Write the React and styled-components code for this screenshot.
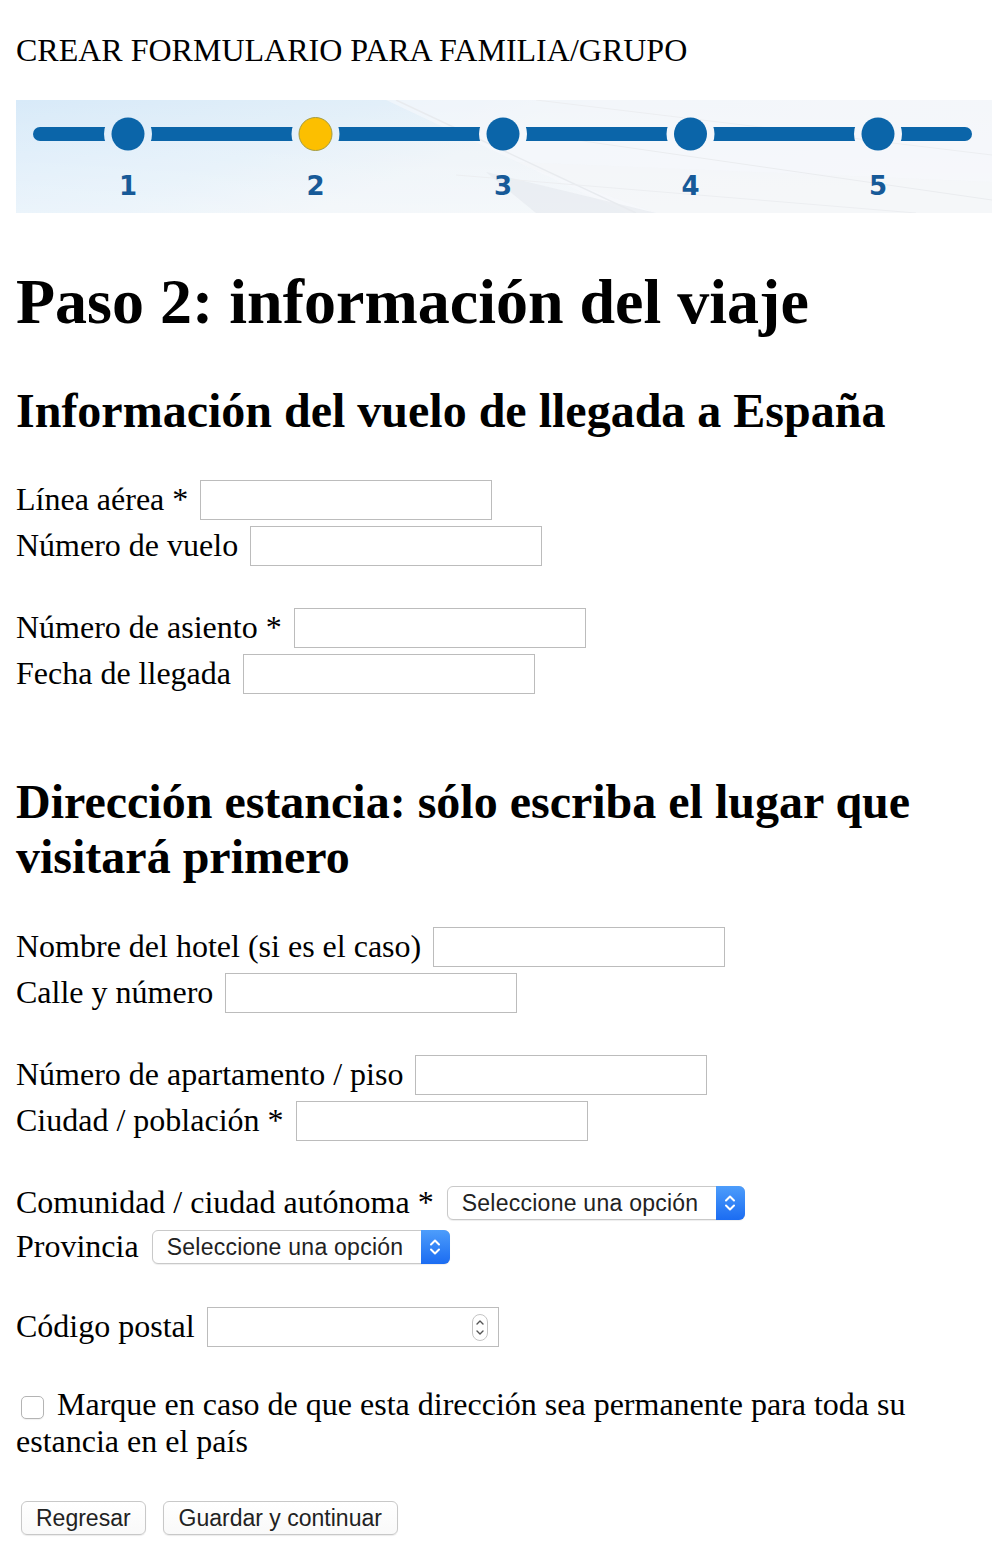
import React from "react";
import styled, { createGlobalStyle } from "styled-components";

const GlobalStyle = createGlobalStyle`
  html, body { margin: 0; padding: 0; background: #fff; }
  body { font-family: "Liberation Serif", "Times New Roman", serif; color: #000; }
`;

const Page = styled.div`
  padding: 0 16px 40px;
  width: 976px;
`;

const Title = styled.div`
  margin: 32px 0 0;
  font-size: 32px;
  line-height: 36px;
  white-space: nowrap;
`;

const BannerBox = styled.div`
  margin-top: 32px;
  height: 113px;
  line-height: 0;
`;

const H1 = styled.h1`
  margin: 52px 0 0;
  font-size: 64px;
  line-height: 74px;
  font-weight: 700;
`;

const H2 = styled.h2`
  margin: ${(p) => p.$top}px 0 0;
  font-size: 48px;
  line-height: 55px;
  font-weight: 700;
`;

const Group = styled.div`
  margin-top: ${(p) => p.$top}px;
  display: flex;
  flex-direction: column;
`;

const Row = styled.div`
  display: flex;
  align-items: center;
  height: ${(p) => p.$h || 46}px;
`;

const Label = styled.label`
  font-size: 32px;
  line-height: 37px;
  white-space: nowrap;
  margin-top: -1px;
`;

const TextInput = styled.input`
  box-sizing: border-box;
  width: 292px;
  height: 40px;
  margin: 0 0 0 12px;
  border: 1px solid #bcbcbc;
  background: #fff;
  padding: 0 8px;
  font: 22px "Liberation Sans", sans-serif;
  outline: none;
`;

const NumberWrap = styled.div`
  position: relative;
  margin-left: 12px;
  width: 292px;
  height: 40px;
`;

const NumberField = styled(TextInput)`
  margin: 0;
`;

const Spinner = styled.svg`
  position: absolute;
  right: 11px;
  top: 7px;
  pointer-events: none;
`;

const SelectWrap = styled.div`
  position: relative;
  margin-left: 13px;
  width: 298px;
  height: 34px;
`;

const Select = styled.select`
  appearance: none;
  -webkit-appearance: none;
  box-sizing: border-box;
  width: 100%;
  height: 100%;
  margin: 0;
  border: 1px solid #c9c9c9;
  border-radius: 6px;
  background: #fff;
  box-shadow: 0 1px 1px rgba(0, 0, 0, 0.07);
  padding: 0 36px 0 14px;
  font: 23px "Liberation Sans", Arial, sans-serif;
  letter-spacing: 0.25px;
  color: #222;
  outline: none;
`;

const SelectArrow = styled.span`
  position: absolute;
  top: 0;
  right: 0;
  bottom: 0;
  width: 29px;
  border-radius: 0 6px 6px 0;
  background: linear-gradient(#4d9dfb, #1b6cf2);
  display: flex;
  align-items: center;
  justify-content: center;
  pointer-events: none;
`;

const CheckPara = styled.p`
  margin: 36px 0 0;
  font-size: 32px;
  line-height: 37px;
`;

const Check = styled.input`
  appearance: none;
  -webkit-appearance: none;
  box-sizing: border-box;
  width: 23px;
  height: 23px;
  margin: 0 5px;
  vertical-align: -4px;
  border: 1px solid #b4b4b4;
  border-radius: 5px;
  background: #fff;
  box-shadow: 0 1px 1px rgba(0, 0, 0, 0.06);
`;

const Buttons = styled.div`
  margin-top: 41px;
  display: flex;
  gap: 17px;
  padding-left: 5px;
`;

const Button = styled.button`
  box-sizing: border-box;
  height: 34px;
  padding: 0 ${(p) => p.$pad || 15}px;
  border: 1px solid #c8c8c8;
  border-radius: 6px;
  background: linear-gradient(#ffffff, #f9f9f9);
  box-shadow: 0 1px 1px rgba(0, 0, 0, 0.08);
  font: 23px "Liberation Sans", Arial, sans-serif;
  color: #222;
  line-height: 32px;
`;

const centers = [112, 299.5, 487, 674.5, 862];

function Banner() {
  return (
    <BannerBox>
      <svg width="976" height="113" viewBox="0 0 976 113">
        <defs>
          <linearGradient id="bg" x1="0" x2="1" y1="0" y2="0.3">
            <stop offset="0" stopColor="#d8eaf9" />
            <stop offset="0.35" stopColor="#e2eff9" />
            <stop offset="0.55" stopColor="#edf3f8" />
            <stop offset="1" stopColor="#f1f4f8" />
          </linearGradient>
          <linearGradient id="vg" x1="0" x2="0" y1="0" y2="1">
            <stop offset="0" stopColor="#ffffff" stopOpacity="0" />
            <stop offset="1" stopColor="#ffffff" stopOpacity="0.35" />
          </linearGradient>
          <mask id="lineMask" maskUnits="userSpaceOnUse" x="0" y="0" width="976" height="113">
            <rect x="0" y="0" width="976" height="113" fill="white" />
            {centers.map((c) => (
              <circle key={c} cx={c} cy="34" r="24" fill="black" />
            ))}
          </mask>
        </defs>
        <rect width="976" height="113" fill="url(#bg)" />
        <rect width="976" height="113" fill="url(#vg)" />
        <polygon points="370,0 976,0 976,113 610,113" fill="#f7f9fb" opacity="0.6" />
        <polygon points="470,72 640,113 520,113" fill="#e2e6eb" opacity="0.5" />
        <polygon points="500,62 976,82 976,113 640,113" fill="#f4f6f8" opacity="0.5" />
        <line x1="380" y1="0" x2="620" y2="113" stroke="#e8ebef" strokeWidth="1.5" />
        <line x1="520" y1="0" x2="976" y2="55" stroke="#eceef1" strokeWidth="1" />
        <line x1="560" y1="40" x2="976" y2="100" stroke="#eaecef" strokeWidth="1" />
        <line x1="440" y1="75" x2="900" y2="113" stroke="#eceef1" strokeWidth="1" />
        <rect x="17" y="27" width="939" height="14" rx="7" fill="#0b65a9" mask="url(#lineMask)" />
        {centers.map((c, i) => (
          <circle
            key={c}
            cx={c}
            cy="34"
            r="16.5"
            fill={i === 1 ? "#fcbf00" : "#0b65a9"}
            stroke={i === 1 ? "#a39c45" : "none"}
            strokeWidth="1"
          />
        ))}
        {centers.map((c, i) => (
          <text
            key={c}
            x={c}
            y="95"
            textAnchor="middle"
            fontFamily="'DejaVu Sans', Verdana, sans-serif"
            fontWeight="700"
            fontSize="26"
            fill="#175a98"
          >
            {i + 1}
          </text>
        ))}
      </svg>
    </BannerBox>
  );
}

function Field({ label }) {
  return (
    <Row>
      <Label>{label}</Label>
      <TextInput type="text" />
    </Row>
  );
}

function SelectField({ label }) {
  return (
    <Row $h={44}>
      <Label>{label}</Label>
      <SelectWrap>
        <Select defaultValue="">
          <option value="">Seleccione una opción</option>
        </Select>
        <SelectArrow>
          <svg width="12" height="20" viewBox="0 0 12 20">
            <polyline points="2,7.5 6,3.5 10,7.5" fill="none" stroke="#fff" strokeWidth="2" strokeLinecap="round" strokeLinejoin="round" />
            <polyline points="2,12.5 6,16.5 10,12.5" fill="none" stroke="#fff" strokeWidth="2" strokeLinecap="round" strokeLinejoin="round" />
          </svg>
        </SelectArrow>
      </SelectWrap>
    </Row>
  );
}

function NumberInputField({ label }) {
  return (
    <Row>
      <Label>{label}</Label>
      <NumberWrap>
        <NumberField type="text" inputMode="numeric" />
        <Spinner width="16" height="27" viewBox="0 0 16 27">
          <rect x="0.5" y="0.5" width="15" height="26" rx="7.5" fill="#fff" stroke="#c4c4c4" />
          <polyline points="5,10 8,7 11,10" fill="none" stroke="#555" strokeWidth="1.4" strokeLinecap="round" strokeLinejoin="round" />
          <polyline points="5,17 8,20 11,17" fill="none" stroke="#555" strokeWidth="1.4" strokeLinecap="round" strokeLinejoin="round" />
        </Spinner>
      </NumberWrap>
    </Row>
  );
}

export default function App() {
  return (
    <>
      <GlobalStyle />
      <Page>
        <Title>CREAR FORMULARIO PARA FAMILIA/GRUPO</Title>
        <Banner />
        <H1>Paso 2: información del viaje</H1>
        <H2 $top={44}>Información del vuelo de llegada a España</H2>
        <Group $top={39}>
          <Field label="Línea aérea *" />
          <Field label="Número de vuelo" />
        </Group>
        <Group $top={36}>
          <Field label="Número de asiento *" />
          <Field label="Fecha de llegada" />
        </Group>
        <H2 $top={77}>Dirección estancia: sólo escriba el lugar que visitará primero</H2>
        <Group $top={40}>
          <Field label="Nombre del hotel (si es el caso)" />
          <Field label="Calle y número" />
        </Group>
        <Group $top={36}>
          <Field label="Número de apartamento / piso" />
          <Field label="Ciudad / población *" />
        </Group>
        <Group $top={37}>
          <SelectField label="Comunidad / ciudad autónoma *" />
          <SelectField label="Provincia" />
        </Group>
        <Group $top={35}>
          <NumberInputField label="Código postal" />
        </Group>
        <CheckPara>
          <Check type="checkbox" />
          {" "}Marque en caso de que esta dirección sea permanente para toda su estancia en el país
        </CheckPara>
        <Buttons>
          <Button type="button" $pad={14}>Regresar</Button>
          <Button type="button">Guardar y continuar</Button>
        </Buttons>
      </Page>
    </>
  );
}
